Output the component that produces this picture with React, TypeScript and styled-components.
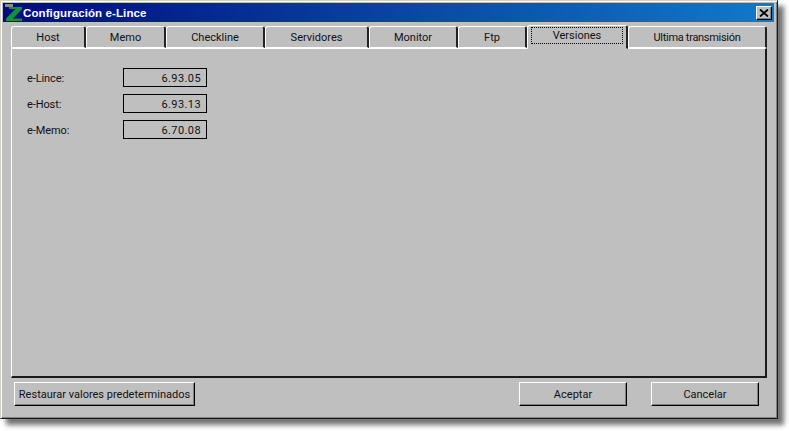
import React from "react";
import styled, { createGlobalStyle } from "styled-components";

const Global = createGlobalStyle`
  html, body { margin: 0; padding: 0; background: #fff; }
  body { width: 789px; height: 431px; overflow: hidden; font-family: Roboto, "Liberation Sans", Arial, sans-serif; font-size: 11px; color: #000; }
`;

const Dialog = styled.div`
  box-sizing: border-box;
  width: 778px;
  height: 419px;
  background: #bfbfbf;
  border-style: solid;
  border-width: 1px;
  border-color: #d4d0c8 #1a1a1a #1a1a1a #d4d0c8;
  box-shadow: inset 1px 1px 0 #fff, inset -1px -1px 0 #7f7f7f, 6px 6px 5px rgba(0, 0, 0, 0.55);
  padding: 2px 3px 0 2px;
  display: flex;
  flex-direction: column;
`;

const TitleBar = styled.div`
  height: 19px;
  flex: none;
  display: flex;
  align-items: center;
  background: linear-gradient(90deg, #000a80 0%, #0b4fa8 60%, #0f7acb 100%);
  padding: 0 2px 0 2px;
`;

const TitleText = styled.span`
  flex: 1;
  color: #fff;
  font: bold 11.5px "Liberation Sans", Arial, sans-serif;
  letter-spacing: 0.1px;
`;

const CloseButton = styled.button`
  box-sizing: border-box;
  width: 16px;
  height: 14px;
  padding: 0;
  display: flex;
  align-items: center;
  justify-content: center;
  background: #bfbfbf;
  border: 1px solid;
  border-color: #fff #000 #000 #fff;
  box-shadow: inset -1px -1px 0 #7f7f7f;
`;

const Content = styled.div`
  flex: 1;
  display: flex;
  flex-direction: column;
  padding: 2px 7px 0 8px;
  min-height: 0;
`;

const TabRow = styled.div`
  display: flex;
  align-items: flex-end;
  height: 24px;
  flex: none;
  position: relative;
  z-index: 1;
`;

const Tab = styled.div<{ $w: number; $active?: boolean; $spacing?: number }>`
  box-sizing: border-box;
  width: ${(p) => p.$w}px;
  height: ${(p) => (p.$active ? 24 : 22)}px;
  flex: none;
  display: flex;
  align-items: center;
  justify-content: center;
  background: #bfbfbf;
  border-style: solid;
  border-color: #fff #222 ${(p) => (p.$active ? "#bfbfbf" : "#fff")} #fff;
  border-width: 1px 2px 1px 1px;
  border-radius: 3px 3px 0 0;
  padding-top: ${(p) => (p.$active ? 0 : 1)}px;
  margin-bottom: ${(p) => (p.$active ? -1 : 0)}px;
  font-size: 11px;
  letter-spacing: ${(p) => p.$spacing ?? 0}px;
  color: #111;
`;

const FocusLabel = styled.span`
  box-sizing: border-box;
  width: 92px;
  height: 17px;
  display: flex;
  align-items: center;
  justify-content: center;
  border: 1px dotted #000;
  margin-top: -3px;
`;

const Panel = styled.div`
  box-sizing: border-box;
  height: 330px;
  flex: none;
  background: #bfbfbf;
  border-style: solid;
  border-width: 1px 2px 2px 1px;
  border-color: #fff #1a1a1a #1a1a1a #fff;
  padding: 19px 0 0 15px;
  display: flex;
  flex-direction: column;
  gap: 7px;
`;

const VersionRow = styled.div`
  display: flex;
  align-items: center;
  height: 19px;
`;

const VersionLabel = styled.span`
  width: 96px;
  padding-top: 1px;
  font-size: 11px;
  letter-spacing: -0.1px;
  color: #111;
`;

const VersionValue = styled.span`
  box-sizing: border-box;
  width: 84px;
  height: 19px;
  display: flex;
  align-items: center;
  justify-content: flex-end;
  padding: 1px 5px 0 0;
  border: 1px solid #000;
  font-size: 11px;
  letter-spacing: 0.4px;
  color: #111;
`;

const Footer = styled.div`
  display: flex;
  align-items: flex-start;
  padding: 4px 8px 0 3px;
  gap: 24px;
`;

const Button = styled.button<{ $w: number; $push?: boolean }>`
  box-sizing: border-box;
  width: ${(p) => p.$w}px;
  height: 24px;
  padding: 0;
  margin-left: ${(p) => (p.$push ? "auto" : "0")};
  background: #bfbfbf;
  border: 1px solid;
  border-color: #fff #000 #000 #fff;
  box-shadow: inset -1px -1px 0 #7f7f7f;
  font: 11px Roboto, "Liberation Sans", Arial, sans-serif;
  white-space: nowrap;
  color: #111;
`;

const tabs: [string, number, number?][] = [
  ["Host", 75],
  ["Memo", 80],
  ["Checkline", 99],
  ["Servidores", 104],
  ["Monitor", 89],
  ["Ftp", 69],
  ["Versiones", 101],
  ["Ultima transmisión", 139, -0.3],
];

const versions = [
  ["e-Lince:", "6.93.05"],
  ["e-Host:", "6.93.13"],
  ["e-Memo:", "6.70.08"],
];

const Logo = () => (
  <svg width="18" height="17" viewBox="0 0 18 17" style={{ flex: "none" }}>
    <rect x="0" y="0" width="8" height="3" fill="#8c8c8c" />
    <path d="M4 3H17V5L8 14.5H17V17H1V14.5L10.5 5H4Z" fill="#12943a" />
  </svg>
);

export default function App() {
  return (
    <>
      <Global />
      <Dialog>
        <TitleBar>
          <Logo />
          <TitleText>Configuración e-Lince</TitleText>
          <CloseButton aria-label="Cerrar">
            <svg width="10" height="8" viewBox="0 0 10 8">
              <path d="M1 0.5L9 7.5M9 0.5L1 7.5" stroke="#000" strokeWidth="1.8" fill="none" />
            </svg>
          </CloseButton>
        </TitleBar>
        <Content>
          <TabRow>
            {tabs.map(([name, w, spacing]) =>
              name === "Versiones" ? (
                <Tab key={name} $w={w} $active>
                  <FocusLabel>{name}</FocusLabel>
                </Tab>
              ) : (
                <Tab key={name} $w={w} $spacing={spacing}>
                  {name}
                </Tab>
              )
            )}
          </TabRow>
          <Panel>
            {versions.map(([label, value]) => (
              <VersionRow key={label}>
                <VersionLabel>{label}</VersionLabel>
                <VersionValue>{value}</VersionValue>
              </VersionRow>
            ))}
          </Panel>
          <Footer>
            <Button $w={181}>Restaurar valores predeterminados</Button>
            <Button $w={108} $push>Aceptar</Button>
            <Button $w={108}>Cancelar</Button>
          </Footer>
        </Content>
      </Dialog>
    </>
  );
}
